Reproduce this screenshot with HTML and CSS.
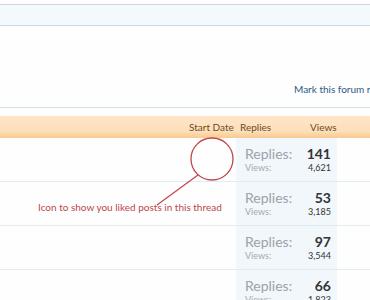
FILE: index.html
```html
<html>
	<head>
		<link rel="stylesheet" href="styles.css">
	</head>
	<body>

		<div class="topBar"></div>

		<div class="pageActions">
			<a class="markRead" href="#">Mark this forum read</a>
		</div>

		<div class="threadList">

			<div class="listHeader">
				<div class="colMain"></div>
				<div class="colStart">Start Date</div>
				<div class="colReplies">Replies</div>
				<div class="colViews">Views</div>
			</div>

			<div class="threadRow">
				<div class="threadMain"></div>
				<div class="threadStats">
					<div class="statLine"><span class="statBig">Replies:</span><span class="numBig">141</span></div>
					<div class="statLine"><span class="statSmall">Views:</span><span class="numSmall">4,621</span></div>
				</div>
			</div>

			<div class="threadRow">
				<div class="threadMain"></div>
				<div class="threadStats">
					<div class="statLine"><span class="statBig">Replies:</span><span class="numBig">53</span></div>
					<div class="statLine"><span class="statSmall">Views:</span><span class="numSmall">3,185</span></div>
				</div>
			</div>

			<div class="threadRow">
				<div class="threadMain"></div>
				<div class="threadStats">
					<div class="statLine"><span class="statBig">Replies:</span><span class="numBig">97</span></div>
					<div class="statLine"><span class="statSmall">Views:</span><span class="numSmall">3,544</span></div>
				</div>
			</div>

			<div class="threadRow">
				<div class="threadMain"></div>
				<div class="threadStats">
					<div class="statLine"><span class="statBig">Replies:</span><span class="numBig">66</span></div>
					<div class="statLine"><span class="statSmall">Views:</span><span class="numSmall">1,823</span></div>
				</div>
			</div>

		</div>

		<!-- annotation drawn over the screenshot -->
		<svg class="noteMarks" width="370" height="300">
			<circle cx="212" cy="159" r="21" fill="none" stroke="#c0454a" stroke-width="1.3"/>
			<line x1="198" y1="175" x2="157" y2="205" stroke="#c0454a" stroke-width="1.2"/>
		</svg>
		<div class="noteText">Icon to show you liked posts in this thread</div>

	</body>
</html>
```

FILE: styles.css
```css
body {
	margin: 0;
	width: 370px;
	height: 300px;
	overflow: hidden;
	background: #fefefe;
	font-family: "Lato", "Liberation Sans", sans-serif;
	position: relative;
}

.topBar {
	margin-top: 4px;
	height: 20px;
	background: #f4f9fc;
	border-top: 1px solid #c6d9e4;
	border-bottom: 1px solid #c6d9e4;
}

.pageActions {
	height: 81px;
	display: flex;
	align-items: flex-end;
	padding-left: 294px;
	white-space: nowrap;
	border-bottom: 1px solid #cfe0e6;
}
.markRead {
	color: #2c5a85;
	font-size: 10px;
	text-decoration: none;
	margin-bottom: 12px;
}

.threadList {
	margin-top: 8px;
	width: 370px;
}

.listHeader {
	display: flex;
	height: 22px;
	align-items: center;
	background: linear-gradient(to bottom, #fee6c8 0%, #fddfba 70%, #f8c98e 100%);
	color: #6e4b22;
	font-size: 10px;
	white-space: nowrap;
}
.colMain {
	width: 189px;
}
.colStart {
	width: 51px;
}
.colReplies {
	width: 70px;
}

.threadRow {
	display: flex;
	height: 43px;
	border-bottom: 1px solid #e1ecf2;
}
.threadMain {
	width: 236px;
}
.threadStats {
	width: 86px;
	padding-left: 9px;
	padding-right: 6px;
	background: #f1f7fb;
	padding-top: 8px;
}
.statLine {
	display: flex;
	justify-content: space-between;
	align-items: baseline;
}
.statBig {
	font-size: 14px;
	color: #9aa3ab;
	line-height: 16px;
}
.numBig {
	font-size: 14px;
	font-weight: bold;
	color: #333;
	line-height: 16px;
}
.statSmall {
	font-size: 9px;
	color: #a3abb2;
	line-height: 11px;
}
.numSmall {
	font-size: 9px;
	color: #333;
	line-height: 11px;
}

.noteMarks {
	position: absolute;
	left: 0;
	top: 0;
}
.noteText {
	position: absolute;
	left: 38px;
	top: 201px;
	font-size: 10px;
	color: #c0454a;
	white-space: nowrap;
}
```
